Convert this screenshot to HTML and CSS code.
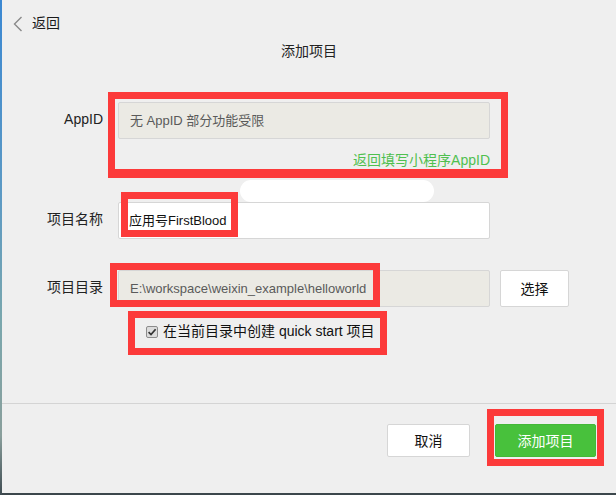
FILE: index.html
```html
<!DOCTYPE html>
<html lang="zh-CN">
<head>
<meta charset="utf-8">
<title>添加项目</title>
<link rel="stylesheet" href="styles.css">
</head>
<body>
<div class="window">
  <div class="topbar">
    <svg class="chev" width="10" height="16" viewBox="0 0 10 16"><polyline points="8.5,1 1.5,8 8.5,15" fill="none" stroke="#8a8a8a" stroke-width="1.4"/></svg>
    <span class="back">返回</span>
  </div>
  <div class="title">添加项目</div>

  <div class="form">
    <div class="row row-appid">
      <div class="label">AppID</div>
      <div class="field field-disabled">无 AppID 部分功能受限</div>
    </div>
    <div class="link-row"><span class="link">返回填写小程序AppID</span></div>

    <div class="row row-name">
      <div class="label">项目名称</div>
      <div class="field field-white">应用号FirstBlood</div>
    </div>

    <div class="row row-dir">
      <div class="label">项目目录</div>
      <div class="field field-disabled">E:\workspace\weixin_example\helloworld</div>
      <div class="btn btn-select">选择</div>
    </div>

    <div class="check-row">
      <svg class="cbox" width="12" height="12" viewBox="0 0 12 12"><rect x="0.5" y="0.5" width="11" height="11" rx="1.5" fill="#dcdcdc" stroke="#8c8c8c"/><polyline points="2.6,6.2 5,8.6 9.6,3.2" fill="none" stroke="#333" stroke-width="1.7"/></svg>
      <span class="check-text">在当前目录中创建 quick start 项目</span>
    </div>
  </div>

  <div class="footer">
    <div class="btn btn-cancel">取消</div>
    <div class="btn btn-primary">添加项目</div>
  </div>

  <div class="blob"></div>
  <div class="mark mark-appid"></div>
  <div class="mark mark-name"></div>
  <div class="mark mark-dir"></div>
  <div class="mark mark-check"></div>
  <div class="mark mark-add"></div>
</div>
</body>
</html>
```

FILE: styles.css
```css
html {
  margin: 0;
  height: 495px;
  background: linear-gradient(180deg, #3b88d2 0%, #5d9ac4 40%, #7aa7ad 65%, #8a9f9c 88%, #3f4c52 100%);
}
body {
  margin: 0;
  padding: 0 0 2px 2px;
  font-family: "Liberation Sans", "Noto Sans CJK SC", sans-serif;
  font-size: 14px;
  line-height: 20px;
  color: #222;
}
.window {
  position: relative;
  width: 614px;
  height: 493px;
  background: #efefef;
  display: flex;
  flex-direction: column;
  box-shadow: 0 2px 0 #3c474c;
}
.topbar {
  display: flex;
  align-items: center;
  padding-top: 13px;
  height: 20px;
}
.chev {
  margin-left: 11px;
  margin-right: 9px;
  margin-top: 1px;
}
.back {
  color: #1a1a1a;
}
.title {
  margin-top: 8px;
  text-align: center;
  color: #222;
}
.form {
  margin-top: 41px;
  display: flex;
  flex-direction: column;
}
.row {
  display: flex;
  align-items: center;
}
.label {
  width: 101px;
  text-align: right;
  margin-right: 15px;
  color: #222;
  margin-top: -4px;
}
.field {
  width: 372px;
  height: 37px;
  box-sizing: border-box;
  border: 1px solid #d6d6d6;
  border-radius: 2px;
  padding: 0 11px;
  display: flex;
  align-items: center;
  font-size: 13px;
}
.field-disabled {
  background: #ebeae4;
  color: #5a5a5a;
}
.field-white {
  background: #fff;
  color: #111;
  padding-left: 10px;
}
.link-row {
  margin-top: 11px;
  width: 488px;
  text-align: right;
}
.link {
  color: #4fc04f;
}
.row-name {
  margin-top: 32px;
}
.row-dir {
  margin-top: 31px;
}
.btn {
  box-sizing: border-box;
  border: 1px solid #d6d6d6;
  border-radius: 2px;
  background: #fff;
  display: flex;
  align-items: center;
  justify-content: center;
  color: #111;
}
.btn-select {
  width: 69px;
  height: 37px;
  margin-left: 10px;
}
.check-row {
  margin-top: 14px;
  padding-left: 144px;
  display: flex;
  align-items: center;
}
.cbox {
  margin-right: 5px;
  margin-top: 2px;
}
.check-text {
  color: #111;
}
.footer {
  margin-top: auto;
  height: 90px;
  border-top: 1px solid #d4d4d4;
  display: flex;
  justify-content: flex-end;
  align-items: flex-start;
  padding: 20px 20px 0 0;
  gap: 25px;
  box-sizing: border-box;
}
.btn-cancel {
  width: 83px;
  height: 33px;
}
.btn-primary {
  width: 101px;
  height: 33px;
  background: #48c13c;
  border-color: #44b838;
  color: #fff;
}
.blob {
  position: absolute;
  left: 238px;
  top: 180px;
  width: 194px;
  height: 22px;
  border-radius: 11px;
  background: #fff;
}
.mark {
  position: absolute;
  box-sizing: border-box;
  border: 7px solid #fc3a3a;
}
.mark-appid {
  left: 106px;
  top: 92px;
  width: 400px;
  height: 86px;
  border-bottom-width: 9px;
}
.mark-name {
  left: 119px;
  top: 192px;
  width: 117px;
  height: 45px;
}
.mark-dir {
  left: 108px;
  top: 263px;
  width: 270px;
  height: 44px;
}
.mark-check {
  left: 126px;
  top: 311px;
  width: 259px;
  height: 44px;
}
.mark-add {
  left: 485px;
  top: 409px;
  width: 117px;
  height: 57px;
}
```
